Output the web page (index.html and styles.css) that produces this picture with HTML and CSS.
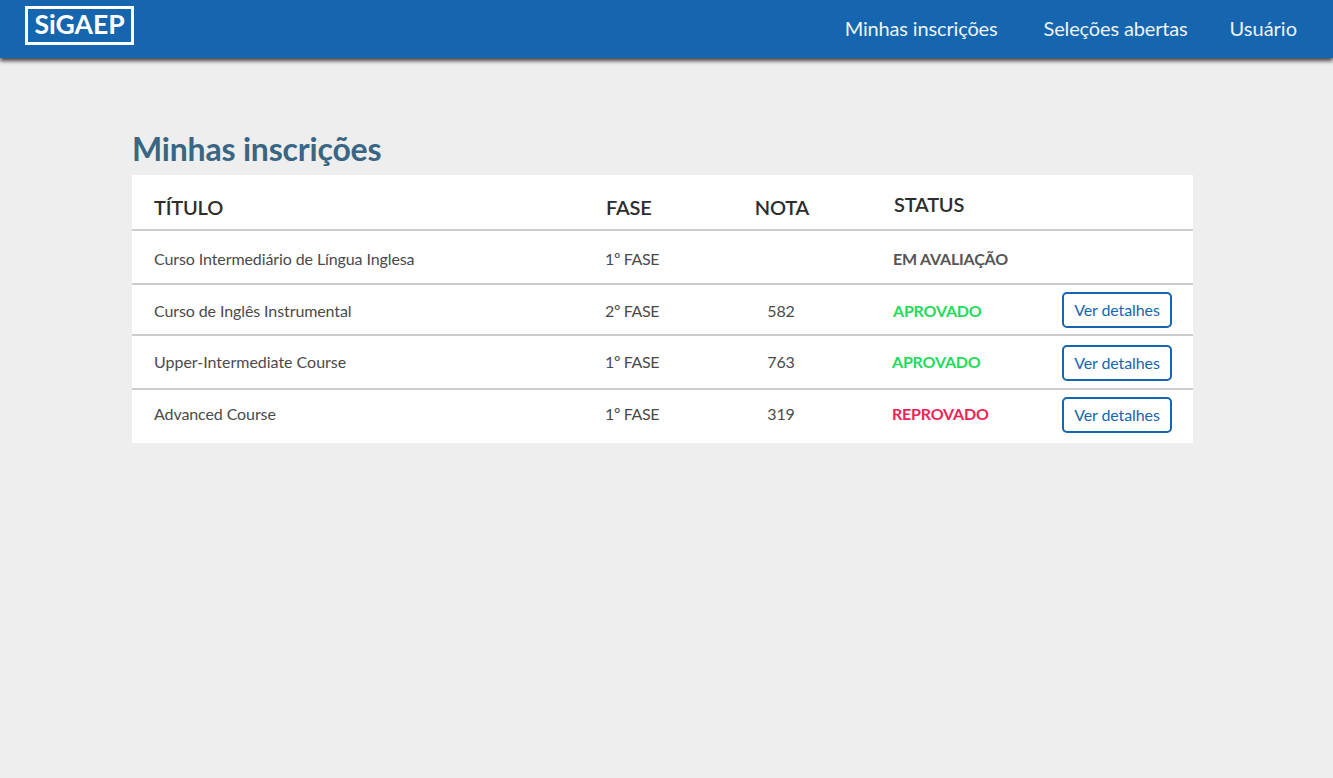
FILE: index.html
```html
<!DOCTYPE html>
<html lang="pt-BR">
<head>
    <meta charset="UTF-8">
    <meta name="viewport" content="width=device-width, initial-scale=1.0">
    <title>SiGAEP - Minhas inscrições</title>
    <link rel="stylesheet" href="styles.css">
</head>
<body>
    <header class="topbar">
        <a class="logo" href="#">SiGAEP</a>
        <nav class="nav-menu">
            <a class="nav-first" href="#">Minhas inscrições</a>
            <a class="nav-second" href="#">Seleções abertas</a>
            <a class="nav-last" href="#">Usuário</a>
        </nav>
    </header>

    <main class="content">
        <h1 class="page-title">Minhas inscrições</h1>
        <section class="table">
            <div class="row row-head">
                <div class="head-title">TÍTULO</div>
                <div class="head-title head-fase">FASE</div>
                <div class="head-title head-nota">NOTA</div>
                <div class="head-status">STATUS</div>
            </div>
            <div class="row row-1">
                <div>Curso Intermediário de Língua Inglesa</div>
                <div class="cell-fase">1º FASE</div>
                <div class="cell-center"></div>
                <div class="status status-wait">EM AVALIAÇÃO</div>
            </div>
            <div class="row row-2">
                <div>Curso de Inglês Instrumental</div>
                <div class="cell-fase">2º FASE</div>
                <div class="cell-center">582</div>
                <div class="status status-ok">APROVADO</div>
                <a class="btn" href="#">Ver detalhes</a>
            </div>
            <div class="row row-3">
                <div class="cell-wide">Upper-Intermediate Course</div>
                <div class="cell-fase">1º FASE</div>
                <div class="cell-center">763</div>
                <div class="status status-ok status-left">APROVADO</div>
                <a class="btn" href="#">Ver detalhes</a>
            </div>
            <div class="row row-4">
                <div>Advanced Course</div>
                <div class="cell-fase">1º FASE</div>
                <div class="cell-center">319</div>
                <div class="status status-bad status-left">REPROVADO</div>
                <a class="btn" href="#">Ver detalhes</a>
            </div>
        </section>
    </main>
</body>
</html>
```

FILE: styles.css
```css
body {
    margin: 0;
    min-height: 778px;
    font-family: Lato, sans-serif;
    background-color: #eee;
    color: #4a4a4a;
}
a {
    text-decoration: none;
}
.topbar {
    height: 58px;
    background-color: #1666af;
    box-shadow: 0 3px 4px rgba(0, 0, 0, 0.7);
    display: flex;
    justify-content: space-between;
    align-items: center;
    padding: 0 36px 0 25px;
}
.logo {
    box-sizing: border-box;
    width: 109px;
    height: 39px;
    margin-bottom: 7px;
    border: 3px solid #fff;
    color: #fff;
    font-size: 26.5px;
    font-weight: 700;
    line-height: 31px;
    text-align: center;
}
.nav-menu {
    display: flex;
    align-items: center;
    padding-bottom: 2px;
}
.nav-menu a {
    color: #edf3f9;
    font-size: 20px;
    letter-spacing: -0.15px;
}
.nav-menu .nav-last {
    letter-spacing: 0;
}
.nav-first {
    margin-right: 46px;
}
.nav-second {
    margin-right: 42px;
}
.content {
    width: 1061px;
    margin-left: 132px;
    padding-top: 72px;
}
.page-title {
    margin: 0;
    height: 45px;
    color: #3a6684;
    font-size: 32px;
    font-weight: 700;
    line-height: 38px;
    letter-spacing: -0.2px;
}
.table {
    background-color: #fff;
}
.row {
    display: grid;
    grid-template-columns: 451px 101px 150px 206px 110px;
    align-items: center;
    padding-left: 22px;
    font-size: 16px;
    letter-spacing: -0.1px;
    border-bottom: 2px solid #ccc;
    box-sizing: border-box;
}
.row-head {
    height: 56px;
    color: #2d2d2d;
    font-size: 20px;
    font-weight: 600;
    letter-spacing: -0.2px;
}
.row-1 {
    height: 54px;
    padding-top: 2px;
}
.row-2 {
    height: 51px;
    padding-top: 1px;
}
.row-3 {
    height: 54px;
    padding-bottom: 1px;
}
.row-3 .btn {
    margin-top: 3px;
}
.row-4 {
    height: 53px;
    padding-bottom: 7px;
    border-bottom: 0;
}
.row-4 .btn {
    margin-top: 4px;
}
.head-title {
    padding-top: 9px;
}
.head-fase {
    padding-left: 1px;
}
.head-nota {
    padding-left: 2px;
    text-align: center;
}
.head-status {
    padding-left: 38px;
    padding-top: 3px;
}
.cell-center {
    text-align: center;
}
.cell-fase {
    letter-spacing: -0.35px;
}
.cell-wide {
    letter-spacing: -0.02px;
}
.status {
    padding-left: 37px;
    font-weight: 700;
    letter-spacing: -0.2px;
}
.status-left {
    padding-left: 36px;
}
.status-wait {
    color: #555;
}
.status-ok {
    color: #1fdb5c;
}
.status-bad {
    color: #ee2456;
}
.btn {
    box-sizing: border-box;
    height: 36px;
    border: 2px solid #1666af;
    border-radius: 5px;
    color: #1666af;
    font-size: 16px;
    line-height: 32px;
    text-align: center;
}
```
